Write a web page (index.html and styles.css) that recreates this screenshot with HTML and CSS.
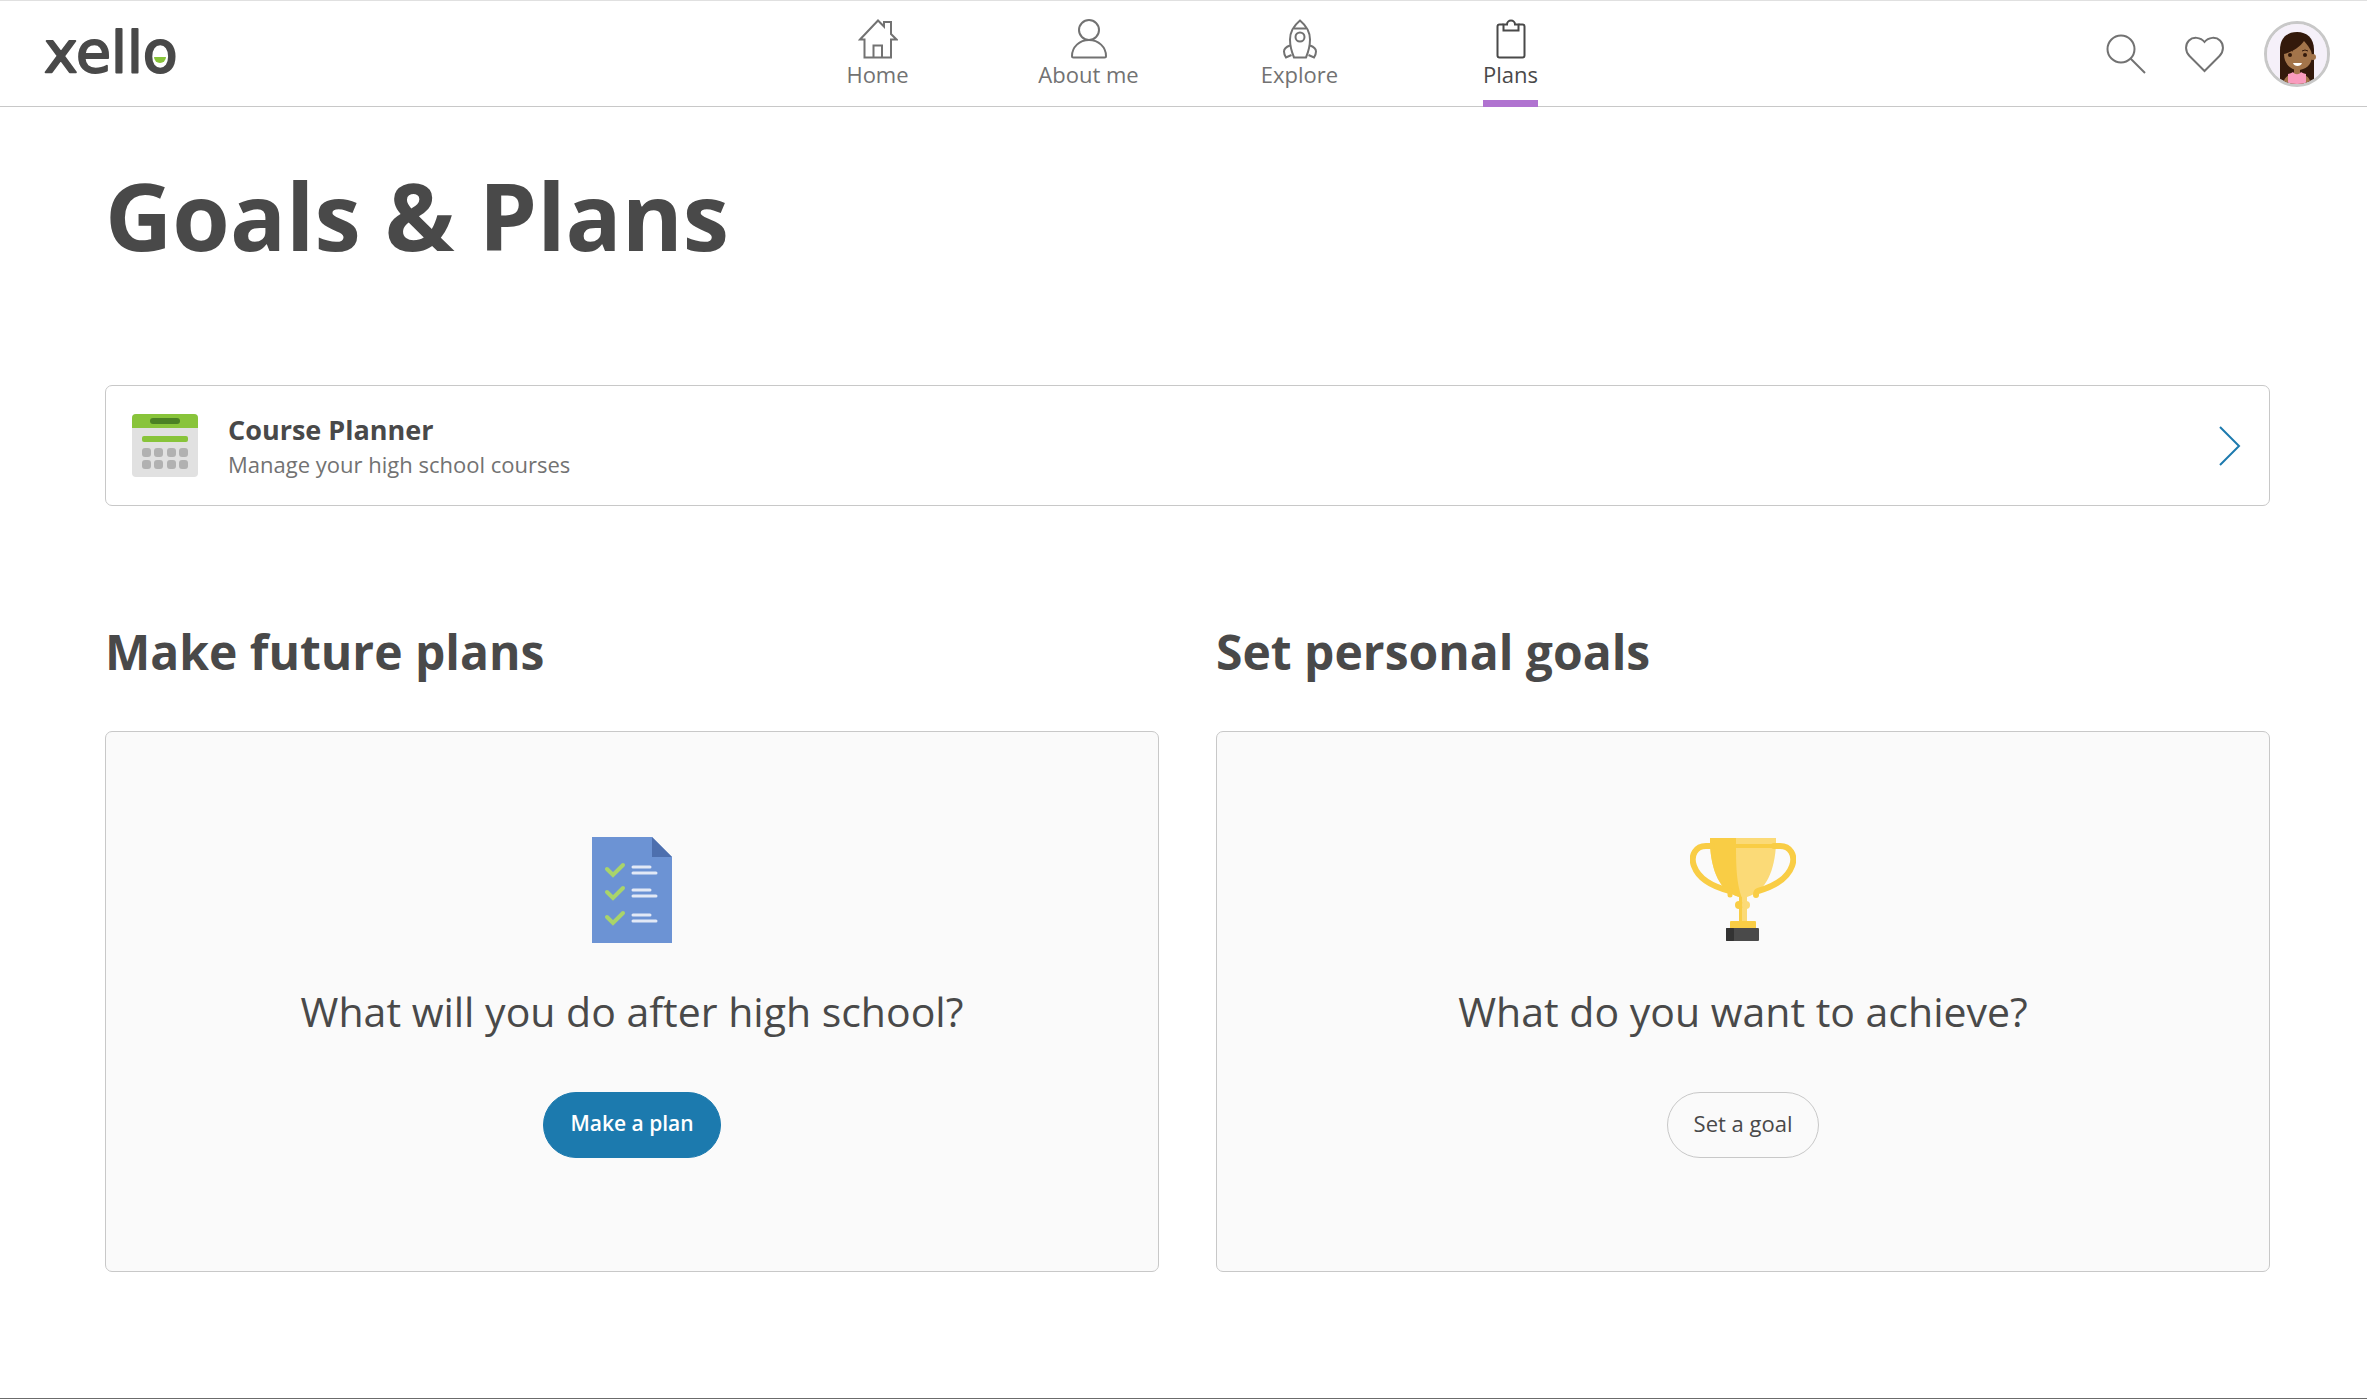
FILE: index.html
```html
<!DOCTYPE html>
<html lang="en">
<head>
  <meta charset="utf-8">
  <title>Goals &amp; Plans</title>
  <link rel="stylesheet" href="styles.css">
</head>
<body>
  <header class="header">
    <a class="logo" href="#" aria-label="xello home">
      <svg width="150" height="70" viewBox="0 0 150 70">
        <text class="logo-text" x="0" y="53">xello</text>
        <path d="M110 38h12a6 6 0 0 1-12 0z" fill="#88c43a"/>
      </svg>
    </a>

    <nav class="nav">
      <a class="nav-item" href="#">
        <svg class="nav-icon" viewBox="0 0 40 40">
          <path d="M2 20.500 20 1.500l6 6V3h7v12l5.500 5.500H33V38.500H6.500v-18z"/>
          <path d="M15.500 38V26.500h8.500V38"/>
        </svg>
        <span class="nav-label">Home</span>
      </a>
      <a class="nav-item" href="#">
        <svg class="nav-icon" viewBox="0 0 40 40">
          <circle cx="20" cy="11" r="10"/>
          <path d="M20 21c-9.500 0-17 7-17 16 0 1 .5 1.500 1.500 1.500h31c1 0 1.500-.5 1.500-1.500 0-9-7.500-16-17-16z"/>
        </svg>
        <span class="nav-label">About me</span>
      </a>
      <a class="nav-item" href="#">
        <svg class="nav-icon" viewBox="0 0 40 40">
          <path d="M20 1.500c-6 5-10 12-10 19 0 6 1.500 12 4 18h12c2.500-6 4-12 4-18 0-7-4-14-10-19z"/>
          <path d="M14 9.500h12"/>
          <circle cx="20" cy="18" r="4.500"/>
          <path d="M10 26.500c-4 1.500-6 3.500-6 6 0 2 .7 4 2 6l5.500-2.500M30 26.500c4 1.500 6 3.500 6 6 0 2-.7 4-2 6l-5.500-2.500"/>
        </svg>
        <span class="nav-label">Explore</span>
      </a>
      <a class="nav-item active" href="#" aria-current="page">
        <svg class="nav-icon" viewBox="0 0 40 40">
          <path d="M12.500 5.500h-4a2 2 0 0 0-2 2v29a2 2 0 0 0 2 2h23a2 2 0 0 0 2-2v-29a2 2 0 0 0-2-2h-4"/>
          <path d="M12.500 5.500v6h15v-6h-3.500a4 4 0 0 0-8 0z"/>
        </svg>
        <span class="nav-label">Plans</span>
      </a>
    </nav>

    <div class="actions">
      <button class="icon-btn" type="button" aria-label="Search">
        <svg width="40" height="40" viewBox="0 0 40 40">
          <circle cx="15" cy="15" r="13.500"/>
          <path d="M24.500 24.500 39 39"/>
        </svg>
      </button>
      <button class="icon-btn" type="button" aria-label="Saved">
        <svg width="40" height="40" viewBox="0 0 40 40">
          <path d="M19.500 37 4.500 22C0 17.500 0 10.500 4 6.500c4-4 11.500-3.500 15.500 1.500 4-5 11.500-5.500 15.500-1.500s4 11-.5 15.500z"/>
        </svg>
      </button>
      <button class="avatar" type="button" aria-label="Account">
        <svg width="60" height="60" viewBox="0 0 60 60">
          <rect width="60" height="60" fill="#f5f0f9"/>
          <path d="M13 60V26C13 14 20 8 30 8s17 6 17 18v34z" fill="#33190b"/>
          <path d="M16 60c1-5 3-8 7-9l4-2v-5h6v5l4 2c4 1 6 4 7 9z" fill="#a3744a"/>
          <path d="M21 60V50c3-1 4-1 5-2 2 3 6 3 8 0 1 1 2 1 5 2v10z" fill="#f99cbe"/>
          <circle cx="46" cy="33" r="3" fill="#a3744a"/>
          <path d="M17 30c8-2 16-7 20-13 4 5 8 9 8 15 0 9-7 14-14 14s-14-6-14-16z" fill="#a3744a"/>
          <circle cx="23" cy="31" r="2" fill="#33190b"/>
          <circle cx="38" cy="31" r="2" fill="#33190b"/>
          <path d="M20 27q3-2 6 0M35 27q3-2 6 0" fill="none" stroke="#33190b"/>
          <path d="M26 39h9c-1 4-8 4-9 0z" fill="#fff"/>
        </svg>
      </button>
    </div>
  </header>

  <main class="main">
    <h1 class="title">Goals &amp; Plans</h1>

    <a class="planner" href="#">
      <svg width="66" height="64" viewBox="0 0 66 64">
        <rect width="66" height="63" rx="4" fill="#e1e1e1"/>
        <path d="M0 14V4a4 4 0 0 1 4-4h58a4 4 0 0 1 4 4v10z" fill="#88c43a"/>
        <rect x="18" y="4" width="30" height="6" rx="3" fill="#4b8124"/>
        <rect x="10" y="22" width="46" height="6" rx="2" fill="#88c43a"/>
        <g fill="#b1b1b1">
          <rect x="10" y="34" width="9" height="9" rx="3"/>
          <rect x="22" y="34" width="9" height="9" rx="3"/>
          <rect x="35" y="34" width="9" height="9" rx="3"/>
          <rect x="47" y="34" width="9" height="9" rx="3"/>
          <rect x="10" y="46" width="9" height="9" rx="3"/>
          <rect x="22" y="46" width="9" height="9" rx="3"/>
          <rect x="35" y="46" width="9" height="9" rx="3"/>
          <rect x="47" y="46" width="9" height="9" rx="3"/>
        </g>
      </svg>
      <span class="planner-text">
        <strong class="planner-name">Course Planner</strong>
        <span class="planner-desc">Manage your high school courses</span>
      </span>
      <svg width="22" height="40" viewBox="0 0 22 40" fill="none" stroke="#1c7aae" stroke-width="2">
        <path d="M1 1l19 19L1 39"/>
      </svg>
    </a>

    <div class="columns">
      <section>
        <h2 class="section-title">Make future plans</h2>
        <div class="panel">
          <svg width="106" height="106" viewBox="0 0 106 106">
            <path d="M13 0h60l20 20v86H13z" fill="#6c93d4"/>
            <path d="M73 0v20h20z" fill="#4d6fae"/>
            <g fill="none" stroke-linecap="round">
              <path d="M28 32l6 6 10-10M28 55l6 6 10-10M28 80l6 6 10-10" stroke="#a9d46a" stroke-width="4"/>
              <path d="M54 30h17M54 36h23M54 53h17M54 59h23M54 78h17M54 84h23" stroke="#e2e9f6" stroke-width="3"/>
            </g>
          </svg>
          <p class="question">What will you do after high school?</p>
          <button class="btn btn-primary" type="button">Make a plan</button>
        </div>
      </section>

      <section>
        <h2 class="section-title">Set personal goals</h2>
        <div class="panel">
          <svg width="106" height="106" viewBox="0 0 106 106">
            <path d="M20 1h66v6c-1 26-10 48-29 53v24h-8V60C30 55 21 33 20 7z" fill="#fbda77"/>
            <path d="M20 1h26v6c0 26 1 40 6 54v23h-3V60C30 55 21 33 20 7z" fill="#f9cd45"/>
            <path d="M46 7h39v4H46z" fill="#f9cd45"/>
            <path d="M22 9h-6C6 9 0 18 4 29c5 14 20 21 36 25M84 9h6c10 0 16 9 12 20-5 14-20 21-34 25-2 1-2 2-2 4" fill="none" stroke="#f9cd45" stroke-width="6" stroke-linecap="round"/>
            <path d="M40 54v4" stroke="#f9cd45" stroke-width="5" stroke-linecap="round"/>
            <path d="M49 60h3v24h-3z" fill="#f9cd45"/>
            <circle cx="49" cy="68" r="4" fill="#f9cd45"/>
            <circle cx="56" cy="68" r="4" fill="#fbda77"/>
            <rect x="40" y="84" width="26" height="8" rx="1" fill="#f9cd45"/>
            <rect x="36" y="91" width="33" height="13" rx="1" fill="#4a4a4a"/>
            <rect x="36" y="91" width="8" height="13" rx="1" fill="#333"/>
          </svg>
          <p class="question">What do you want to achieve?</p>
          <button class="btn" type="button">Set a goal</button>
        </div>
      </section>
    </div>
  </main>
</body>
</html>
```
FILE: styles.css
```css
* {
  box-sizing: border-box;
}
body {
  margin: 0;
  min-height: 100vh;
  border-top: 1px solid #e0e0e0;
  border-bottom: 1px solid #6b6b6b;
  background: #fff;
  color: #494949;
  font-family: "Open Sans", Lato, sans-serif;
}
a {
  color: inherit;
  text-decoration: none;
}
button {
  font-family: inherit;
  cursor: pointer;
}
svg {
  display: block;
  flex: none;
}

/* header */
.header {
  display: grid;
  grid-template-columns: 1fr auto 1fr;
  align-items: center;
  height: 106px;
  padding: 0 23px 0 44px;
  border-bottom: 1px solid #c8c8c8;
}
.logo-text {
  font-family: "DejaVu Sans", sans-serif;
  font-size: 57px;
  fill: #494949;
  stroke: #494949;
  stroke-width: 2px;
  stroke-linejoin: round;
}
.nav {
  display: flex;
  height: 105px;
}
.nav-item {
  display: flex;
  flex-direction: column;
  align-items: center;
  width: 211px;
  padding-top: 18px;
  color: #727272;
  font-size: 22px;
  line-height: 31px;
}
.nav-icon {
  width: 40px;
  height: 40px;
  fill: none;
  stroke: currentColor;
  stroke-width: 2px;
}
.nav-label {
  flex: none;
  height: 48px;
}
.active {
  color: #494949;
}
.active .nav-label {
  border-bottom: 7px solid #b073d0;
}
.actions {
  display: flex;
  justify-content: flex-end;
  align-items: center;
  gap: 39px;
  padding-right: 14px;
}
.icon-btn {
  padding: 0;
  border: 0;
  background: none;
}
.icon-btn svg {
  fill: none;
  stroke: #727272;
  stroke-width: 2px;
}
.avatar {
  width: 66px;
  height: 66px;
  padding: 0;
  border: 3px solid #c8c8c8;
  border-radius: 50%;
  overflow: hidden;
}

/* page */
.main {
  padding: 52px 97px 0 105px;
}
.title {
  margin: 0 0 114px;
  font-size: 93px;
  line-height: 112px;
}
.planner {
  display: flex;
  align-items: center;
  gap: 30px;
  height: 121px;
  padding: 0 28px 0 26px;
  border: 1px solid #c8c8c8;
  border-radius: 7px;
}
.planner-text {
  display: flex;
  flex-direction: column;
  flex: 1;
}
.planner-name {
  font-size: 27px;
  line-height: 36px;
}
.planner-desc {
  color: #727272;
  font-size: 22px;
  line-height: 32px;
}
.columns {
  display: grid;
  grid-template-columns: 1fr 1fr;
  gap: 57px;
  padding-top: 116px;
}
.section-title {
  margin: 0 0 49px;
  font-size: 48px;
  line-height: 60px;
}
.panel {
  display: flex;
  flex-direction: column;
  align-items: center;
  padding: 105px 24px 113px;
  border: 1px solid #c8c8c8;
  border-radius: 7px;
  background: #fafafa;
}
.question {
  margin: 43px 0 56px;
  font-size: 41px;
  line-height: 50px;
}
.btn {
  height: 66px;
  padding: 0 26px 4px;
  border: 1px solid #c8c8c8;
  border-radius: 33px;
  background: none;
  color: #494949;
  font-size: 22px;
}
.btn-primary {
  border-color: #1c7aae;
  background: #1c7aae;
  color: #fff;
  font-size: 21px;
  font-weight: 600;
}
```
